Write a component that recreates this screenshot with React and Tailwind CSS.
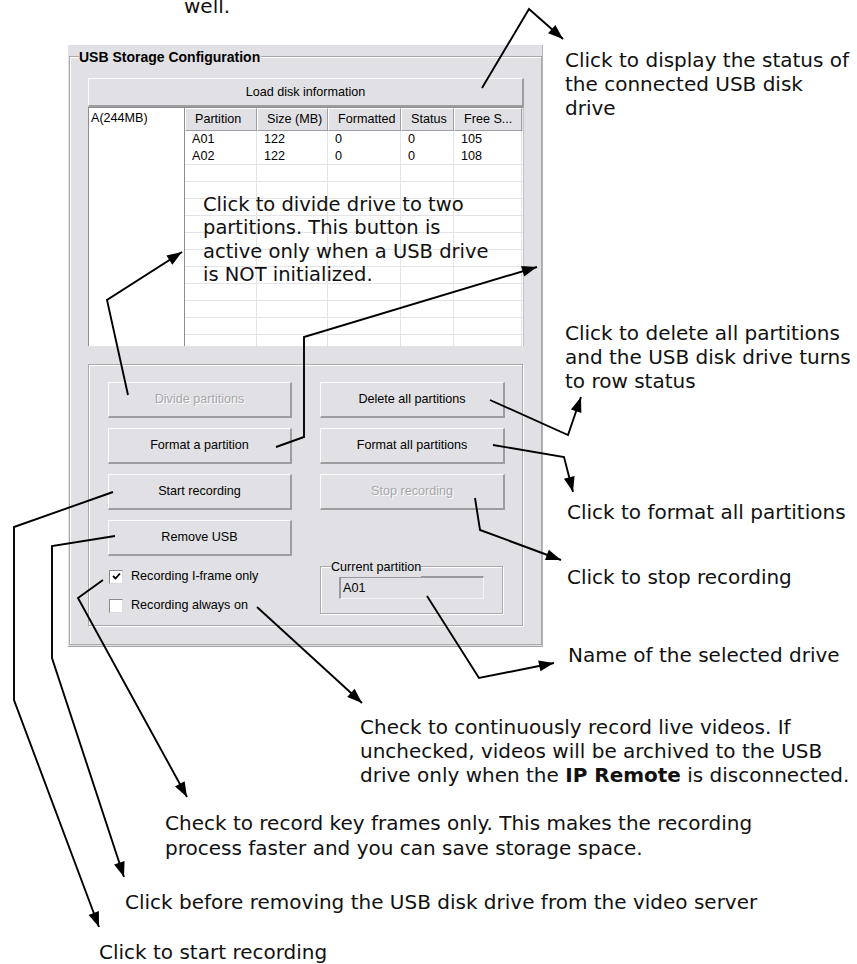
import React from 'react'

const arrows = [
  [[482, 88], [529, 9], [563, 39]],
  [[128, 395], [107, 300], [182, 252]],
  [[276, 447], [304, 437], [304, 337], [537, 267]],
  [[490, 400], [568, 435], [581, 397]],
  [[493, 445], [564, 457], [573, 492]],
  [[475, 498], [480, 530], [561, 560]],
  [[427, 596], [479, 678], [554, 663]],
  [[257, 607], [362, 703]],
  [[103, 580], [78, 598], [187, 797]],
  [[115, 536], [52, 546], [52, 658], [124, 877]],
  [[113, 492], [14, 527], [14, 700], [99, 927]],
]

function head(pts) {
  const [x2, y2] = pts[pts.length - 1]
  const [x1, y1] = pts[pts.length - 2]
  const len = Math.hypot(x2 - x1, y2 - y1)
  const ux = (x2 - x1) / len
  const uy = (y2 - y1) / len
  const bx = x2 - ux * 15
  const by = y2 - uy * 15
  return `${x2},${y2} ${bx - uy * 5.5},${by + ux * 5.5} ${bx + uy * 5.5},${by - ux * 5.5}`
}

function Arrows() {
  return (
    <svg className="pointer-events-none absolute left-0 top-0" width="857" height="964">
      {arrows.map((pts, i) => (
        <g key={i}>
          <polyline points={pts.map((p) => p.join(',')).join(' ')} fill="none" stroke="#000" strokeWidth="1.9" />
          <polygon points={head(pts)} fill="#000" />
        </g>
      ))}
    </svg>
  )
}

function Btn({ children, disabled }) {
  return (
    <div
      className={`flex h-[36px] items-center justify-center border-l border-t border-b-2 border-r-2 border-l-[#fbfbfb] border-t-[#fbfbfb] border-b-[#9d9d9f] border-r-[#9d9d9f] bg-[#e1e0e4] text-[12.6px] ${
        disabled ? 'text-[#a6a6aa] [text-shadow:1px_1px_0_#ffffff]' : 'text-black'
      }`}
    >
      {children}
    </div>
  )
}

function Check({ checked, label }) {
  return (
    <div className="flex h-[15px] items-center gap-[8px]">
      <div className="flex h-[14px] w-[14px] items-center justify-center border border-l-[#8a8a8e] border-t-[#8a8a8e] border-b-[#dcdcdc] border-r-[#dcdcdc] bg-white">
        {checked && (
          <svg width="9" height="9" viewBox="0 0 9 9">
            <polyline points="1,4 3.5,6.5 8,1.5" fill="none" stroke="#000" strokeWidth="1.8" />
          </svg>
        )}
      </div>
      <span className="text-[12.6px] text-black">{label}</span>
    </div>
  )
}

const cols = [
  { name: 'Partition', w: 'w-[72px]' },
  { name: 'Size (MB)', w: 'w-[71px]' },
  { name: 'Formatted', w: 'w-[73px]' },
  { name: 'Status', w: 'w-[53px]' },
  { name: 'Free S...', w: 'w-[68px]' },
]

const rows = [
  ['A01', '122', '0', '0', '105'],
  ['A02', '122', '0', '0', '108'],
]

function Table() {
  const empty = Array.from({ length: 11 })
  return (
    <div className="flex h-[239px] w-[339px] flex-col overflow-hidden border-r border-t border-r-[#c4c4c8] border-t-[#8e8e92] bg-white">
      <div className="flex h-[23px] shrink-0 bg-[#e1e0e4]">
        {cols.map((c) => (
          <div
            key={c.name}
            className={`${c.w} flex shrink-0 items-center border-b border-l border-r border-t border-b-[#a0a0a4] border-l-white border-r-[#a0a0a4] border-t-white pl-[9px] text-[12.6px] text-black`}
          >
            {c.name}
          </div>
        ))}
      </div>
      <div className="flex-1">
        {rows.map((r, i) => (
          <div key={i} className={`flex h-[17px] ${i === 1 ? 'border-b border-b-[#e4e4e6]' : ''}`}>
            {r.map((v, j) => (
              <div key={j} className={`${cols[j].w} flex shrink-0 items-center border-r border-r-[#e4e4e6] pl-[7px] text-[12.6px] leading-none text-black`}>
                {v}
              </div>
            ))}
          </div>
        ))}
        {empty.map((_, i) => (
          <div key={i} className="flex h-[17px] border-b border-b-[#e4e4e6]">
            {cols.map((c) => (
              <div key={c.name} className={`${c.w} shrink-0 border-r border-r-[#e4e4e6]`} />
            ))}
          </div>
        ))}
      </div>
    </div>
  )
}

function Panel() {
  return (
    <div className="ml-[68px] mt-[45px] h-[602px] w-[475px] border-b border-r border-b-[#a4a4a8] border-r-[#b4b4b8] bg-[#e1e0e4] pl-[1px] pt-[11px] font-['Liberation_Sans',Arial,sans-serif]">
      <div className="relative h-[589px] w-[473px] border border-[#a9a9ad] pl-[18px] pt-[21px] shadow-[inset_1px_1px_0_#ffffff]">
        <span className="absolute left-[9px] top-[-10px] bg-[#e1e0e4] pr-[1px] text-[14px] font-bold text-black">
          USB Storage Configuration
        </span>
        <div className="flex h-[29px] w-[436px] items-center justify-center border-l border-t border-b-2 border-r-2 border-l-[#fbfbfb] border-t-[#fbfbfb] border-b-[#9d9d9f] border-r-[#9d9d9f] text-[12.6px] text-black">
          Load disk information
        </div>
        <div className="flex w-[436px]">
          <div className="h-[239px] w-[97px] border-l border-r border-t border-[#8e8e92] bg-white pl-[2px] pt-[1px] text-[12.6px] text-black">
            A(244MB)
          </div>
          <Table />
        </div>
        <div className="mt-[18px] h-[262px] w-[435px] border border-[#a9a9ad] pl-[19px] pt-[17px] shadow-[inset_1px_1px_0_#ffffff,1px_1px_0_#ffffff]">
          <div className="grid grid-cols-[184px_185px] gap-x-[28px] gap-y-[10px]">
            <Btn disabled>Divide partitions</Btn>
            <Btn>Delete all partitions</Btn>
            <Btn>Format a partition</Btn>
            <Btn>Format all partitions</Btn>
            <Btn>Start recording</Btn>
            <Btn disabled>Stop recording</Btn>
            <Btn>Remove USB</Btn>
          </div>
          <div className="mt-[10px] flex gap-[28px]">
            <div className="flex w-[184px] flex-col gap-[14px] pl-[1px] pt-[3px]">
              <Check checked label="Recording I-frame only" />
              <Check label="Recording always on" />
            </div>
            <div className="relative h-[48px] w-[183px] border border-[#a9a9ad] pl-[18px] pt-[9px] shadow-[inset_1px_1px_0_#ffffff,1px_1px_0_#ffffff]">
              <span className="absolute left-[10px] top-[-9px] bg-[#e1e0e4] text-[12.6px] text-black">Current partition</span>
              <div className="flex h-[23px] w-[145px] items-center border-b border-l-2 border-r border-t-2 border-b-[#f4f4f4] border-l-[#9a9a9e] border-r-[#f4f4f4] border-t-[#9a9a9e] pl-[2px] text-[12.6px] text-black">
                A01
              </div>
            </div>
          </div>
        </div>
      </div>
    </div>
  )
}

export default function App() {
  const note = "absolute whitespace-nowrap text-[20px] leading-[24px] text-[#111]"
  return (
    <div className="relative h-[964px] w-[857px] overflow-hidden bg-white font-['DejaVu_Sans',sans-serif]">
      <div className={`${note} left-[184px] top-[-6px]`}>well.</div>
      <Panel />
      <div className="absolute left-[203px] top-[193px] whitespace-nowrap font-['DejaVu_Sans',sans-serif] text-[19.5px] leading-[23.3px] text-[#111]">
        Click to divide drive to two
        <br />
        partitions. This button is
        <br />
        active only when a USB drive
        <br />
        is NOT initialized.
      </div>
      <div className={`${note} left-[565px] top-[48px]`}>
        Click to display the status of
        <br />
        the connected USB disk
        <br />
        drive
      </div>
      <div className={`${note} left-[565px] top-[321px]`}>
        Click to delete all partitions
        <br />
        and the USB disk drive turns
        <br />
        to row status
      </div>
      <div className={`${note} left-[567px] top-[500px]`}>Click to format all partitions</div>
      <div className={`${note} left-[567px] top-[565px]`}>Click to stop recording</div>
      <div className={`${note} left-[568px] top-[643px]`}>Name of the selected drive</div>
      <div className={`${note} left-[360px] top-[715px] leading-[24.5px]`}>
        Check to continuously record live videos. If
        <br />
        unchecked, videos will be archived to the USB
        <br />
        drive only when the <b>IP Remote</b> is disconnected.
      </div>
      <div className={`${note} left-[165px] top-[811px] leading-[25px]`}>
        Check to record key frames only. This makes the recording
        <br />
        process faster and you can save storage space.
      </div>
      <div className={`${note} left-[125px] top-[890px]`}>Click before removing the USB disk drive from the video server</div>
      <div className={`${note} left-[99px] top-[940px]`}>Click to start recording</div>
      <Arrows />
    </div>
  )
}
